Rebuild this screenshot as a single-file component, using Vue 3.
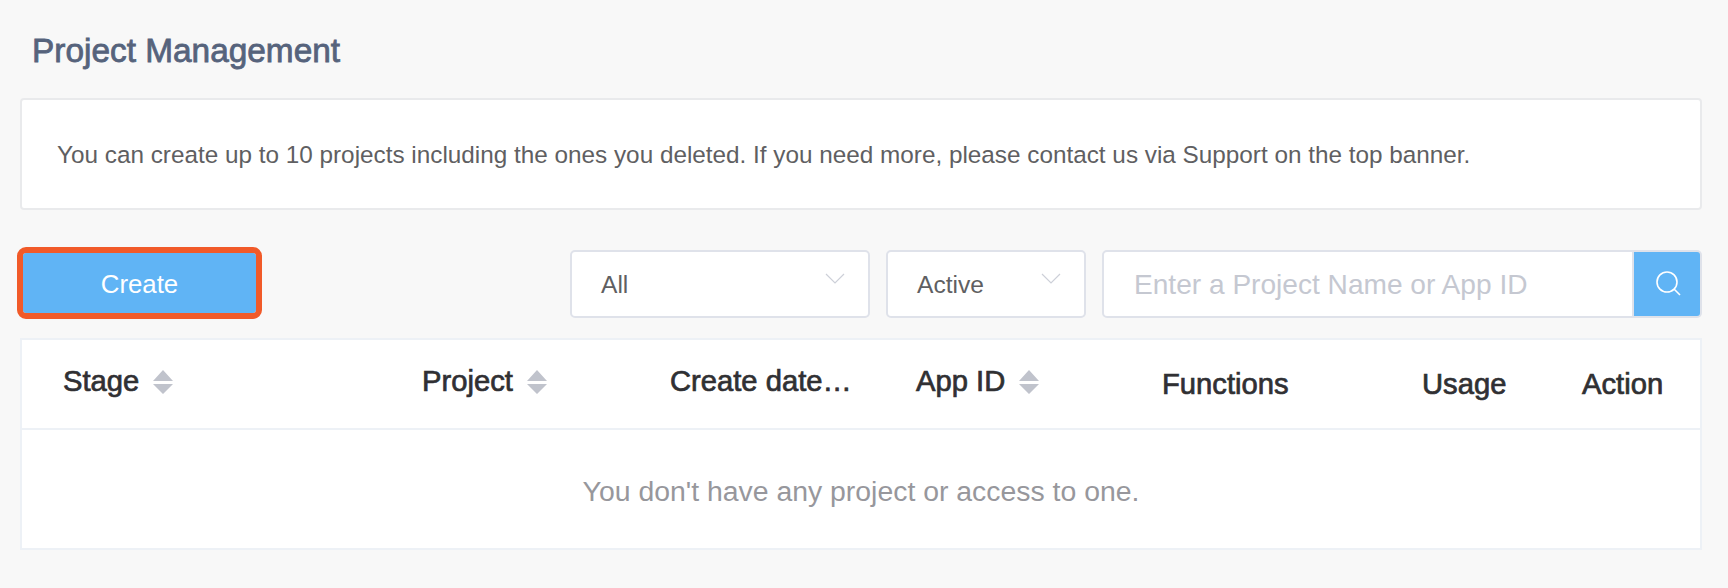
<script setup>
const columns = [
  { label: 'Stage', sortable: true },
  { label: 'Project', sortable: true },
  { label: 'Create date…', sortable: false, raised: true },
  { label: 'App ID', sortable: true },
  { label: 'Functions', sortable: false },
  { label: 'Usage', sortable: false },
  { label: 'Action', sortable: false }
]
</script>

<template>
  <div class="page">
    <h1 class="title">Project Management</h1>
    <div class="notice">You can create up to 10 projects including the ones you deleted. If you need more, please contact us via Support on the top banner.</div>
    <div class="toolbar">
      <button class="create">Create</button>
      <div class="filters">
        <div class="select select-stage">
          <span>All</span>
          <svg class="chev" width="20" height="12" viewBox="0 0 20 12"><path d="M1 1l9 9 9-9" fill="none" stroke="#cdd0d8" stroke-width="1.2"/></svg>
        </div>
        <div class="select select-status">
          <span>Active</span>
          <svg class="chev" width="20" height="12" viewBox="0 0 20 12"><path d="M1 1l9 9 9-9" fill="none" stroke="#cdd0d8" stroke-width="1.2"/></svg>
        </div>
        <div class="search">
          <div class="search-input">Enter a Project Name or App ID</div>
          <div class="search-btn">
            <svg class="search-icon" width="30" height="30" viewBox="0 0 30 30"><circle cx="15" cy="15" r="10" fill="none" stroke="#fff" stroke-width="1.6"/><path d="M22 22l6 6" stroke="#fff" stroke-width="1.6" fill="none"/></svg>
          </div>
        </div>
      </div>
    </div>
    <div class="table">
      <div class="thead">
        <div v-for="c in columns" :key="c.label" class="th" :class="{ up: c.sortable || c.raised }">
          <span>{{ c.label }}</span>
          <svg v-if="c.sortable" class="sort" width="20" height="24" viewBox="0 0 20 24"><path d="M10 0l10 11H0zM0 14h20L10 24z" fill="#c0c3cc"/></svg>
        </div>
      </div>
      <div class="empty">You don't have any project or access to one.</div>
    </div>
  </div>
</template>

<style>
html, body { margin: 0; background: #f8f8f8; }
</style>

<style scoped>
.page {
  width: 1728px;
  height: 588px;
  box-sizing: border-box;
  padding: 0 26px 0 20px;
  font-family: "Liberation Sans", Arial, sans-serif;
  background: #f8f8f8;
  overflow: hidden;
}
.title {
  margin: 0;
  height: 98px;
  box-sizing: border-box;
  padding: 33px 0 0 12px;
  font-size: 33.4px;
  line-height: 36px;
  font-weight: 400;
  -webkit-text-stroke: 0.8px #56637c;
  color: #56637c;
}
.notice {
  height: 112px;
  box-sizing: border-box;
  padding: 1px 0 0 35px;
  display: flex;
  align-items: center;
  background: #fff;
  border: 2px solid #e9eaec;
  border-radius: 4px;
  font-size: 24.3px;
  color: #5f5f62;
}
.toolbar {
  display: flex;
  justify-content: space-between;
  align-items: flex-start;
  height: 128px;
  box-sizing: border-box;
  padding-top: 40px;
}
.create {
  width: 233px;
  height: 60px;
  margin: 3px 0 0 3px;
  padding: 3px 0 0;
  box-sizing: border-box;
  background: #60b4f5;
  border: 0;
  outline: 6px solid #f15a29;
  border-radius: 3px;
  color: #fff;
  font: 25.8px "Liberation Sans", Arial, sans-serif;
}
.filters {
  display: flex;
  gap: 16px;
}
.select {
  height: 68px;
  box-sizing: border-box;
  display: flex;
  justify-content: space-between;
  padding: 0 23px 11px 29px;
  align-items: center;
  background: #fff;
  border: 2px solid #dfe2ea;
  border-radius: 5px;
  font-size: 24.6px;
  color: #5f5f62;
}
.select span { padding-top: 13px; }
.select-stage { width: 300px; }
.select-status { width: 200px; }
.search {
  display: flex;
  width: 600px;
  height: 68px;
}
.search-input {
  flex: 1;
  box-sizing: border-box;
  display: flex;
  align-items: center;
  padding: 1px 0 0 30px;
  background: #fff;
  border: 2px solid #dfe2ea;
  border-radius: 5px 0 0 5px;
  font-size: 28.1px;
  color: #c5c8d1;
}
.search-btn {
  width: 68px;
  box-sizing: border-box;
  display: flex;
  align-items: center;
  justify-content: center;
  background: #60b4f5;
  border: 2px solid #dfe2ea;
  border-left: 0;
  border-radius: 0 5px 5px 0;
}
.search-icon { margin-bottom: 4px; }
.table {
  height: 212px;
  box-sizing: border-box;
  background: #fff;
  border: 2px solid #edf1f6;
}
.thead {
  display: grid;
  grid-template-columns: 359px 248px 246px 246px 260px 160px 1fr;
  height: 90px;
  box-sizing: border-box;
  padding: 1px 0 0 41px;
  border-bottom: 2px solid #edf1f6;
}
.th {
  display: flex;
  align-items: center;
  gap: 14px;
  font-size: 29.2px;
  -webkit-text-stroke: 0.7px #303033;
  color: #303033;
  white-space: nowrap;
}
.th.up { padding-bottom: 6px; }
.sort { margin-top: 1px; }
.empty {
  height: 118px;
  box-sizing: border-box;
  padding-top: 4px;
  display: flex;
  align-items: center;
  justify-content: center;
  font-size: 28.4px;
  color: #97979c;
}
</style>
